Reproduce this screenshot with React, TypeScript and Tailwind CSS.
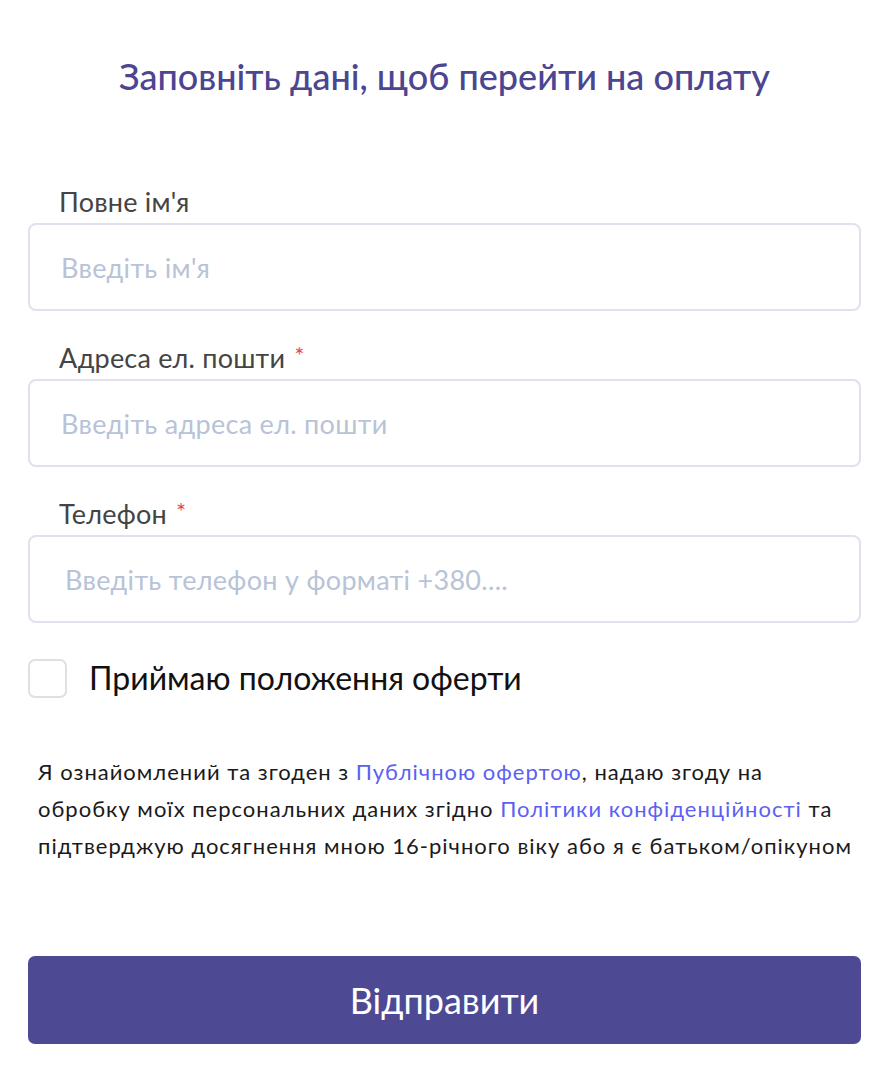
import React from "react";

function Field({ label, placeholder, required, padClass }: { label: string; placeholder: string; required?: boolean; padClass: string }) {
  return (
    <div className="flex flex-col">
      <label className="pl-[31px] text-[27px] leading-[28px] text-[#444444] h-[35px] tracking-[0.2px]">
        {label}
        {required && <span className="text-[#e5484d] text-[24px] align-top ml-[9px] relative top-[-3px]">*</span>}
      </label>
      <input
        className={`h-[88px] w-full rounded-[8px] border-2 border-[#e1e0ee] bg-white ${padClass} pr-[31px] text-[27px] tracking-[0.3px] text-[#333] placeholder:text-[#b8c3d7] outline-none`}
        placeholder={placeholder}
        style={{ fontFamily: "Lato, sans-serif" }}
      />
    </div>
  );
}

export default function App() {
  return (
    <div className="min-h-[1090px] bg-white" style={{ fontFamily: "Lato, 'Noto Sans', sans-serif" }}>
      <div className="ml-[28px] w-[833px] flex flex-col">
        <h1 className="mt-[51px] text-center text-[36px] leading-[50px] font-medium text-[#4b4592]">
          Заповніть дані, щоб перейти на оплату
        </h1>
        <div className="mt-[87px] flex flex-col gap-[33px]">
          <Field label="Повне ім'я" placeholder="Введіть ім'я" padClass="pl-[31px]" />
          <Field label="Адреса ел. пошти" placeholder="Введіть адреса ел. пошти" required padClass="pl-[31px]" />
          <Field label="Телефон" placeholder="Введіть телефон у форматі +380...." required padClass="pl-[35px]" />
        </div>
        <label className="mt-[35px] flex items-center gap-[22px]">
          <span className="h-[39px] w-[39px] rounded-[7px] border-2 border-[#e0e0e0] bg-white" />
          <span className="text-[32px] leading-[40px] text-[#111111]">Приймаю положення оферти</span>
        </label>
        <p className="mt-[55px] pl-[10px] text-[22px] leading-[37px] tracking-[1px] text-[#1a1a1a] whitespace-nowrap">
          Я ознайомлений та згоден з <a className="text-[#5b5ff2]">Публічною офертою</a>, надаю згоду на
          <br />
          обробку моїх персональних даних згідно <a className="text-[#5b5ff2]">Політики конфіденційності</a> та
          <br />
          підтверджую досягнення мною 16-річного віку або я є батьком/опікуном
        </p>
        <button className="mt-[92px] h-[88px] w-full rounded-[7px] bg-[#4e4993] text-[36px] text-white">
          Відправити
        </button>
      </div>
    </div>
  );
}
